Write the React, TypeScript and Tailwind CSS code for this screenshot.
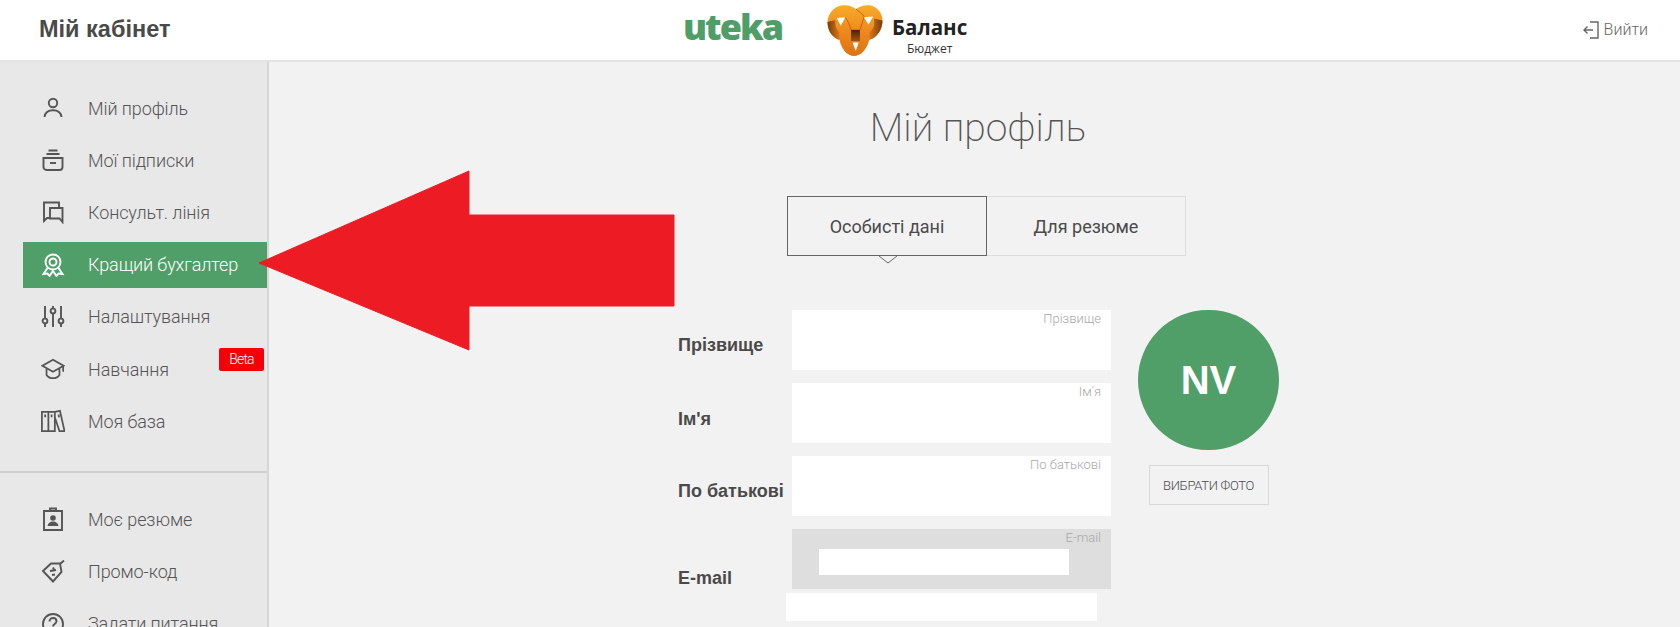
import { ReactNode } from "react";

type NavItem = {
  label: string;
  icon: ReactNode;
  active?: boolean;
  badge?: string;
};

const svgProps = {
  width: 24,
  height: 24,
  viewBox: "0 0 24 24",
  fill: "none",
  stroke: "currentColor",
  strokeWidth: 1.9,
};

const topItems: NavItem[] = [
  {
    label: "Мій профіль",
    icon: (
      <svg {...svgProps}>
        <circle cx="12" cy="7" r="4.2" />
        <path d="M3.5 21c.6-4.6 4-6.8 8.500-6.800s7.900 2.200 8.500 6.800" />
      </svg>
    ),
  },
  {
    label: "Мої підписки",
    icon: (
      <svg {...svgProps}>
        <path d="M7.500 2.500h9M5.500 6h13" />
        <path d="M2.500 10h19v9a3 3 0 0 1-3 3h-13a3 3 0 0 1-3-3z" />
        <path d="M9 15h6" />
      </svg>
    ),
  },
  {
    label: "Консульт. лінія",
    icon: (
      <svg {...svgProps}>
        <path d="M18 7V2.500H3v18.500l3-3h3" />
        <path d="M9 8h12.500v14l-3-3.500H9z" />
      </svg>
    ),
  },
  {
    label: "Кращий бухгалтер",
    active: true,
    icon: (
      <svg {...svgProps}>
        <circle cx="12" cy="9" r="7.500" />
        <circle cx="12" cy="9" r="3.500" />
        <path d="M6.500 15 2.500 21l4-.5 2 2.500 3.500-5 3.500 5 2-2.500 4 .5-4-6" />
      </svg>
    ),
  },
  {
    label: "Налаштування",
    icon: (
      <svg {...svgProps}>
        <path d="M4 1v12M4 19v3M12 1v2M12 9v13M20 1v12M20 19v3" />
        <circle cx="4" cy="16" r="2.400" />
        <circle cx="12" cy="6" r="2.400" />
        <circle cx="20" cy="16" r="2.400" />
      </svg>
    ),
  },
  {
    label: "Навчання",
    badge: "Beta",
    icon: (
      <svg width={26} height={24} viewBox="0 0 26 24" fill="none" stroke="currentColor" strokeWidth={1.9}>
        <path d="M13 2 1.500 8.500 13 15l11.500-6.500z" />
        <path d="M6 12v6.500c1.500 2.500 4.500 3.500 7 3.500s5.500-1 7-3.500V12" />
        <path d="M24 9v6" />
      </svg>
    ),
  },
  {
    label: "Моя база",
    icon: (
      <svg width={26} height={24} viewBox="0 0 26 24" fill="none" stroke="currentColor" strokeWidth={1.9}>
        <path d="M1 2h7v21H1zM8 2h7v21H8zM15 2l5.500-1 5 22h-5.500L15 8" />
        <path d="M4.500 5v3M11.500 5v3M19 5l.6 3" />
      </svg>
    ),
  },
];

const bottomItems: NavItem[] = [
  {
    label: "Моє резюме",
    icon: (
      <svg {...svgProps}>
        <path d="M3 4h18v19H3z" />
        <path d="M9 4V1.500h6V4" />
        <circle cx="12" cy="11" r="2.800" fill="currentColor" stroke="none" />
        <path d="M6.500 19c.5-3 2.500-4.500 5.500-4.500s5 1.500 5.500 4.500z" fill="currentColor" stroke="none" />
      </svg>
    ),
  },
  {
    label: "Промо-код",
    icon: (
      <svg {...svgProps}>
        <path d="M2 11 10 3.500 19 3.500 20.500 12 12 21.500z" />
        <path d="M19 4 23 0.500M9 11l6-1M11 15l3-.5M12 7.500l1 2" />
      </svg>
    ),
  },
  {
    label: "Задати питання",
    icon: (
      <svg {...svgProps}>
        <circle cx="12" cy="12" r="10" />
        <path d="M8.500 9.500c0-2.200 1.600-3.500 3.500-3.500s3.500 1.300 3.500 3.200c0 2.800-3.500 2.800-3.500 5.300" />
        <path d="M12 17v2" />
      </svg>
    ),
  },
];

function NavRow({ item }: { item: NavItem }) {
  return (
    <div className="relative flex h-[52.200px] items-center pl-[23px]">
      <div
        className={
          item.active
            ? "flex h-[46px] w-[244px] items-center bg-[#509e68] pl-[18px] text-white"
            : "flex h-[46px] w-[244px] items-center pl-[18px] text-[#555555]"
        }
      >
        <span className="flex w-[24px] shrink-0 justify-center">{item.icon}</span>
        <span className="ml-[23px] text-[18px] font-light tracking-[-0.1px] whitespace-nowrap">{item.label}</span>
      </div>
      {item.badge ? (
        <span className="absolute top-[5px] left-[219px] flex h-[23px] w-[45px] items-center justify-center rounded-[2px] bg-[#f50007] text-[14px] font-light tracking-[-0.8px] text-white">
          {item.badge}
        </span>
      ) : null}
    </div>
  );
}

function KnotLogo() {
  return (
    <svg width={60} height={53} viewBox="20 8 170 160" className="shrink-0">
      <defs>
        <linearGradient id="knotBody" x1="0" y1="0" x2="0" y2="1">
          <stop offset="0" stopColor="#f8ab2a" />
          <stop offset="0.5" stopColor="#ee8a1d" />
          <stop offset="1" stopColor="#dd7212" />
        </linearGradient>
        <linearGradient id="knotLeft" x1="0" y1="0" x2="1" y2="0">
          <stop offset="0" stopColor="#7a3a0c" />
          <stop offset="1" stopColor="#d9781c" />
        </linearGradient>
        <linearGradient id="knotRight" x1="1" y1="0" x2="0" y2="0">
          <stop offset="0" stopColor="#7a3a0c" />
          <stop offset="1" stopColor="#d9781c" />
        </linearGradient>
        <linearGradient id="knotCore" x1="0" y1="0" x2="0" y2="1">
          <stop offset="0" stopColor="#4a2206" />
          <stop offset="1" stopColor="#a5540f" />
        </linearGradient>
      </defs>
      <path
        d="M22 62C24 30 50 10 75 12C90 12 100 18 108 24C120 14 135 10 150 12C172 16 188 36 188 58C188 85 172 110 148 116C142 145 122 165 102 165C82 165 64 145 58 116C38 110 22 90 22 62Z"
        fill="url(#knotBody)"
      />
      <path d="M22 62C22 90 38 110 58 116L57 92C50 85 44 75 46 56Z" fill="url(#knotLeft)" />
      <path d="M188 58C188 85 172 110 148 116L150 92C160 85 166 72 162 52Z" fill="url(#knotRight)" />
      <path d="M108 24C122 34 132 42 134 50" fill="none" stroke="#c9600f" strokeWidth="3" />
      <path d="M76 48C84 60 90 74 93 86" fill="none" stroke="#c9600f" strokeWidth="3" />
      <path d="M120 86C124 74 128 60 132 48" fill="none" stroke="#c9600f" strokeWidth="3" />
      <path d="M50 50 76 48 62 74Z" fill="#ffffff" />
      <path d="M132 48 160 46 146 70Z" fill="#ffffff" />
      <rect x="93" y="86" width="27" height="34" fill="url(#knotCore)" />
      <path d="M98 124H116L107 150Z" fill="#ffffff" />
    </svg>
  );
}

function Field({ label, placeholder, labelClass, disabled }: { label: string; placeholder: string; labelClass: string; disabled?: boolean }) {
  return (
    <div className="flex h-[60px]">
      <div className={`w-[114px] shrink-0 font-['Liberation_Sans',sans-serif] text-[18px] leading-[22px] font-bold whitespace-nowrap text-[#4a4a4a] ${labelClass}`}>
        {label}
      </div>
      <div className={disabled ? "relative w-[319px] bg-[#dedede]" : "relative w-[319px] bg-white"}>
        <span className="absolute top-0 right-[10px] text-[13px] leading-[18px] font-light text-[#a8a8a8]">{placeholder}</span>
        {disabled ? <div className="mt-[20px] ml-[27px] h-[26px] w-[250px] bg-white" /> : null}
      </div>
    </div>
  );
}

export default function App() {
  return (
    <div className="relative flex h-[627px] flex-col overflow-hidden bg-[#f2f2f2] font-['Roboto',sans-serif]">
      <header className="flex h-[62px] shrink-0 items-center border-b-2 border-[#e3e3e3] bg-white">
        <div className="w-[683px] shrink-0 pl-[39px] font-['Liberation_Sans',sans-serif] text-[23.5px] font-bold text-[#4a4a4a]">Мій кабінет</div>
        <div className="mb-[6px] w-[142px] shrink-0 font-['Open_Sans',sans-serif] text-[36px] leading-none font-extrabold tracking-[-2px] text-[#4f9e68]">uteka</div>
        <KnotLogo />
        <div className="ml-[7px] flex flex-col items-center pt-[10px] font-['Open_Sans',sans-serif]">
          <span className="text-[20.500px] leading-[28px] font-bold text-[#222222]">Баланс</span>
          <span className="text-[12px] leading-[16px] text-[#333333]">Бюджет</span>
        </div>
        <div className="ml-auto flex items-center gap-[5px] pr-[32px] text-[#666666]">
          <svg width={17} height={18} viewBox="0 0 17 18" fill="none" stroke="currentColor" strokeWidth={1.4}>
            <path d="M8 1h8v16H8" />
            <path d="M11 9H2M5.500 5.500 2 9l3.500 3.500" />
          </svg>
          <span className="text-[16px] font-light">Вийти</span>
        </div>
      </header>

      <div className="flex min-h-0 flex-1">
        <aside className="w-[269px] shrink-0 border-r-2 border-[#d6d6d6] bg-[#e8e8e8] pt-[20px]">
          {topItems.map((item) => (
            <NavRow key={item.label} item={item} />
          ))}
          <div className="mt-[24px] mb-[20px] border-t-2 border-[#cfcfcf]" />
          {bottomItems.map((item) => (
            <NavRow key={item.label} item={item} />
          ))}
        </aside>

        <main className="ml-[409px] w-[600px] shrink-0">
          <h1 className="mt-[38px] text-center text-[39px] leading-[56px] font-extralight text-[#555555]">Мій профіль</h1>
          <div className="mt-[40px] ml-[109px] flex h-[60px] w-[399px] text-[18px] text-[#4a4a4a]">
            <div className="relative flex w-[200px] items-center justify-center border border-[#666666]">
              Особисті дані
              <svg width={20} height={9} viewBox="0 0 20 9" className="absolute top-[58px] left-[90px]">
                <path d="M1 1 10 8 19 1" fill="#f2f2f2" stroke="#666666" />
              </svg>
            </div>
            <div className="flex flex-1 items-center justify-center border border-l-0 border-[#dddddd]">Для резюме</div>
          </div>

          <div className="mt-[54px] flex">
            <div className="flex w-[433px] shrink-0 flex-col gap-[13px]">
              <Field label="Прізвище" placeholder="Прізвище" labelClass="pt-[24px]" />
              <Field label="Ім'я" placeholder="Ім'я" labelClass="pt-[25px]" />
              <Field label="По батькові" placeholder="По батькові" labelClass="pt-[24px]" />
              <Field label="E-mail" placeholder="E-mail" labelClass="pt-[38px]" disabled />
              <div className="-mt-[9px] ml-[108px] h-[28px] w-[311px] bg-white" />
            </div>
            <div className="ml-[27px] flex w-[141px] flex-col items-center">
              <div className="flex h-[140px] w-[141px] items-center justify-center rounded-full bg-[#509e68] font-['Liberation_Sans',sans-serif] text-[40px] font-bold text-white">
                NV
              </div>
              <div className="mt-[15px] flex h-[40px] w-[120px] items-center justify-center border border-[#d8d8d8] pt-[1px] text-[13px] font-light tracking-[-0.3px] text-[#4a4a4a]">
                ВИБРАТИ ФОТО
              </div>
            </div>
          </div>
        </main>
      </div>

      {/* annotation arrow drawn over the page */}
      <svg width={680} height={190} viewBox="0 0 680 190" className="absolute top-[165px] left-0">
        <path d="M259 98 469 6V50H674V141H469V185Z" fill="#ed1c24" stroke="#ed1c24" strokeWidth={1} strokeLinejoin="round" />
      </svg>
    </div>
  );
}
